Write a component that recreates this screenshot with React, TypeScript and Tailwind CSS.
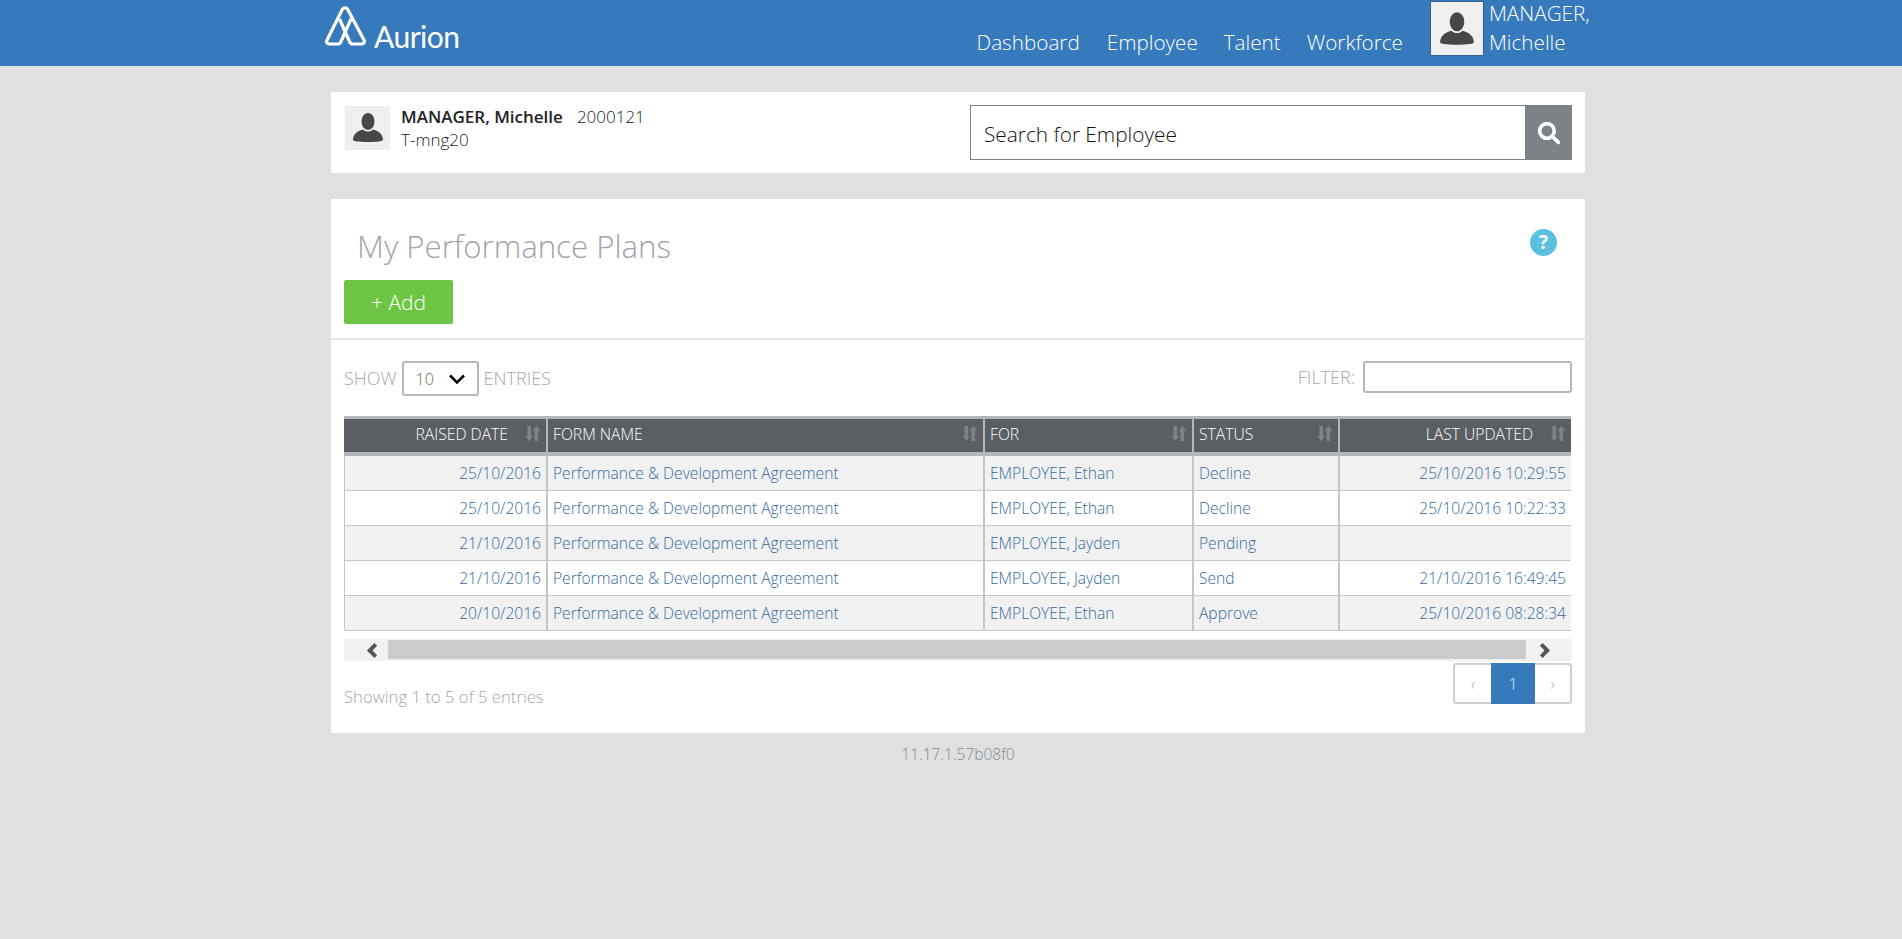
const Person = ({ className }: { className: string }) => (
  <svg viewBox="0 0 32 32" className={className} fill="#474747">
    <ellipse cx="16" cy="9.500" rx="6.500" ry="8.500" />
    <path d="M1 28c0-5.500 4-9 10-10.500 1.500 1.500 3 2 5 2s3.500-.5 5-2c6 1.500 10 5 10 10.500 0 1-5 2-15 2S1 29 1 28z" />
  </svg>
);

const SortIcon = () => (
  <svg viewBox="0 0 16 15" className="w-[16px] h-[15px] shrink-0" fill="#7f8387">
    <path d="M2.500 0h3.500v10h2L4.300 15 .5 10h2z" />
    <path d="M9.500 15H13V5h2.500L11.300 0 7.500 5h2z" />
  </svg>
);

const rows = [
  ["25/10/2016", "EMPLOYEE, Ethan", "Decline", "25/10/2016 10:29:55"],
  ["25/10/2016", "EMPLOYEE, Ethan", "Decline", "25/10/2016 10:22:33"],
  ["21/10/2016", "EMPLOYEE, Jayden", "Pending", ""],
  ["21/10/2016", "EMPLOYEE, Jayden", "Send", "21/10/2016 16:49:45"],
  ["20/10/2016", "EMPLOYEE, Ethan", "Approve", "25/10/2016 08:28:34"],
];

export default function App() {
  return (
    <div className="min-h-[939px] bg-[#dfe0e2] font-['Open_Sans',sans-serif] font-light text-[#333]">
      <header className="h-[66px] bg-[#377abc]">
        <div className="w-[1254px] ml-[331px] h-full flex text-white">
          <div className="flex items-start pt-[6px] -ml-[6px]">
            <svg viewBox="0 0 42 42" className="w-[42px] h-[42px]" fill="none" stroke="#fff" strokeWidth="3.200" strokeLinejoin="round">
              <path d="M14.500 13L24.500 35.500c.7 1.500 1.500 2.500 3 2.500h9c2.500 0 3.500-2 2.500-4L23 4c-1.500-3-4.500-3-6 0L2 34c-1 2 0 4 2.500 4H13c1.500 0 2.300-1 3-2.500L26 13" />
            </svg>
            <span className="ml-[7px] mt-[13px] text-[30px] leading-[34px] font-['Lato',sans-serif] font-normal tracking-[-0.5px]">Aurion</span>
          </div>
          <nav className="ml-auto flex items-start text-[20.700px] leading-[29px]">
            <a className="mt-[28px]">Dashboard</a>
            <a className="mt-[28px] ml-[27px]">Employee</a>
            <a className="mt-[28px] ml-[26px]">Talent</a>
            <a className="mt-[28px] ml-[26px]">Workforce</a>
            <div className="ml-[27px] w-[54px] h-[55px] mt-px bg-[#efefef] border border-[#2f5f8f] flex items-center justify-center">
              <Person className="w-[36px] h-[36px]" />
            </div>
            <div className="ml-[5px] w-[102px] -mr-[6px] -mt-px">MANAGER,<br />Michelle</div>
          </nav>
        </div>
      </header>

      <main className="w-[1254px] ml-[331px]">
        <section className="mt-[26px] h-[81px] bg-white pl-[14px] pr-[13px] flex justify-between">
          <div className="flex items-start pt-[14px]">
            <div className="w-[45px] h-[44px] bg-[#efefef] flex items-center justify-center">
              <Person className="w-[32px] h-[32px]" />
            </div>
            <div className="ml-[11px] -mt-px text-[17px] leading-[23px] text-[#222]">
              <div>
                <span className="font-semibold">MANAGER, Michelle</span>
                <span className="ml-[14px]">2000121</span>
              </div>
              <div>T-mng20</div>
            </div>
          </div>
          <div className="flex self-center w-[602px] h-[55px] border border-[#7d8287]">
            <div className="flex-1 px-[13px] pt-[5px] flex items-center text-[20.800px] text-[#111]">Search for Employee</div>
            <div className="-my-px -mr-px w-[47px] bg-[#7d8287] flex items-center justify-center">
              <svg viewBox="0 0 24 24" className="w-[25px] h-[25px]" fill="none" stroke="#fff" strokeWidth="3.500" strokeLinecap="round">
                <circle cx="10.500" cy="10.500" r="7" />
                <path d="M16 16l5.500 5.500" />
              </svg>
            </div>
          </div>
        </section>

        <section className="mt-[26px] bg-white h-[534px] pt-[24px]">
          <div className="px-[13px] flex justify-between items-start h-[57px]">
            <h1 className="ml-[13px] text-[31.200px] leading-[46px] text-[#a0a4a8]">My Performance Plans</h1>
            <div className="mt-[6px] mr-[15px] w-[27px] h-[27px] rounded-full bg-[#5bc0de] flex items-center justify-center text-white text-[19px] font-bold leading-none">?</div>
          </div>
          <div className="px-[13px] h-[60px] border-b-2 border-[#e2e3e4]">
            <button className="w-[109px] h-[44px] rounded-[2px] bg-[#6cc644] text-white text-[21px] leading-none">+ Add</button>
          </div>

          <div className="px-[13px]">
            <div className="mt-[21px] h-[35px] flex items-center justify-between text-[18px] text-[#a3a6aa]">
              <div className="flex items-center">
                <span>SHOW</span>
                <div className="ml-[5px] w-[77px] h-[35px] border-2 border-[#b5b7b9] rounded-[3px] flex items-center justify-between px-[12px] text-[#666]">
                  <span className="text-[16px]">10</span>
                  <svg viewBox="0 0 16 10" className="w-[16px] h-[10px]" fill="none" stroke="#000" strokeWidth="2.500">
                    <path d="M1 1.500l7 7 7-7" />
                  </svg>
                </div>
                <span className="ml-[5px]">ENTRIES</span>
              </div>
              <div className="flex items-center -mt-[3px]">
                <span className="-ml-px mr-px">FILTER:</span>
                <div className="ml-[7px] w-[209px] h-[32px] border-2 border-[#b5b7b9] rounded-[3px]" />
              </div>
            </div>

            <table className="mt-[20px] w-[1227px] table-fixed border-separate border-spacing-0 text-[15.600px] leading-[24px] text-[#33699f]">
              <colgroup>
                <col className="w-[204px]" />
                <col className="w-[437px]" />
                <col className="w-[209px]" />
                <col className="w-[146px]" />
                <col className="w-[231px]" />
              </colgroup>
              <thead>
                <tr className="bg-[#5a5f63] text-white">
                  {["RAISED DATE", "FORM NAME", "FOR", "STATUS", "LAST UPDATED"].map((h, i) => {
                    const right = i === 0 || i === 4;
                    return (
                      <th key={h} className={`h-[40px] px-[5px] pb-[4px] font-light text-[15.700px] border-t-[3px] border-b-[4px] border-t-[#b4b7b9] border-b-[#b4b7b9] ${i < 4 ? "border-r-2 border-r-[#b4b7b9]" : ""}`}>
                        <div className={`flex items-center ${right ? "justify-end" : "justify-between"}`}>
                          <span>{h}</span>
                          <span className={right ? "ml-[17px]" : ""}><SortIcon /></span>
                        </div>
                      </th>
                    );
                  })}
                </tr>
              </thead>
              <tbody>
                {rows.map((r, i) => (
                  <tr key={i} className={i % 2 === 0 ? "bg-[#f1f1f1]" : "bg-white"}>
                    <td className="h-[35px] px-[5px] text-right border-b border-b-[#c4c6c8] border-l border-l-[#c4c6c8] border-r-2 border-r-[#c4c6c8]">{r[0]}</td>
                    <td className="h-[35px] px-[5px] border-b border-b-[#c4c6c8] border-r-2 border-r-[#c4c6c8]">Performance &amp; Development Agreement</td>
                    <td className="h-[35px] px-[5px] border-b border-b-[#c4c6c8] border-r-2 border-r-[#c4c6c8]">{r[1]}</td>
                    <td className="h-[35px] px-[5px] border-b border-b-[#c4c6c8] border-r-2 border-r-[#c4c6c8]">{r[2]}</td>
                    <td className="h-[35px] px-[5px] text-right border-b border-b-[#c4c6c8]">{r[3]}</td>
                  </tr>
                ))}
              </tbody>
            </table>

            <div className="mt-[8px] h-[22px] bg-[#f1f1f1] flex items-start pt-px">
              <div className="w-[44px] h-[20px] flex items-center justify-center pl-[13px]">
                <svg viewBox="0 0 14 16" className="w-[13px] h-[15px]" fill="#555"><path d="M9 0l3 3-5 5 5 5-3 3-8-8z" /></svg>
              </div>
              <div className="flex-1 h-[19px] bg-[#cbcbcb]" />
              <div className="w-[46px] h-[20px] flex items-center justify-center pr-[9px]">
                <svg viewBox="0 0 14 16" className="w-[13px] h-[15px]" fill="#555"><path d="M5 0L2 3l5 5-5 5 3 3 8-8z" /></svg>
              </div>
            </div>

            <div className="mt-[2px] flex justify-between items-start">
              <div className="mt-[22px] text-[16.700px] leading-[24px] text-[#a3a6aa]">Showing 1 to 5 of 5 entries</div>
              <div className="flex h-[41px] border-2 border-[#cfd0d2] rounded-[3px] text-[#a3a6aa]">
                <div className="w-[36px] flex items-center justify-center text-[16px]">‹</div>
                <div className="w-[44px] -my-[2px] bg-[#377abc] text-[#d5e4f2] flex items-center justify-center text-[17px]">1</div>
                <div className="w-[35px] flex items-center justify-center text-[16px]">›</div>
              </div>
            </div>
          </div>
        </section>

        <footer className="mt-[10px] text-center text-[15.500px] leading-[22px] text-[#85888b]">11.17.1.57b08f0</footer>
      </main>
    </div>
  );
}
